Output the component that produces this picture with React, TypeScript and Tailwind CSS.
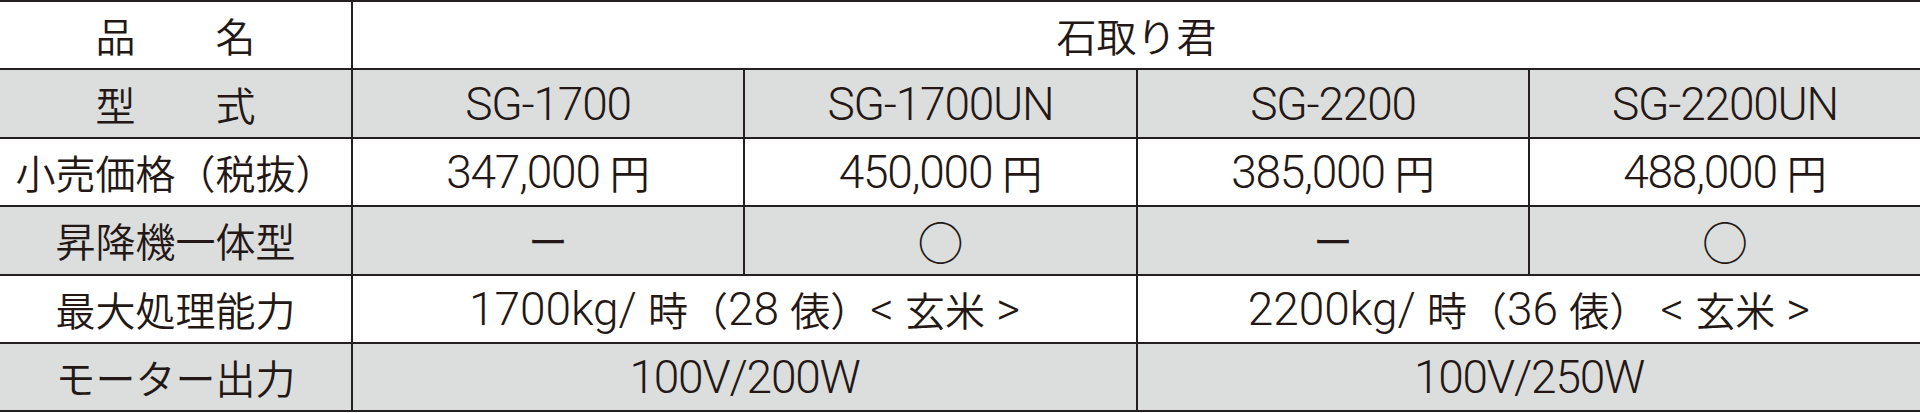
import React from "react";

const JP = { fontFamily: "'Noto Sans CJK JP', 'Noto Sans', sans-serif" };

function L({ children }: { children: React.ReactNode }) {
  return (
    <span className="font-['Roboto','Noto_Sans_CJK_JP',sans-serif] font-light text-[46px] tracking-[-1.2px]">
      {children}
    </span>
  );
}

function W({ children }: { children: React.ReactNode }) {
  return (
    <span className="font-['Roboto','Noto_Sans_CJK_JP',sans-serif] font-light text-[46px] tracking-[0px]">
      {children}
    </span>
  );
}

function Cell({
  children,
  span = 1,
  first = false,
  gray = false,
}: {
  children?: React.ReactNode;
  span?: number;
  first?: boolean;
  gray?: boolean;
}) {
  const spanCls =
    span === 4 ? "col-span-4" : span === 2 ? "col-span-2" : "col-span-1";
  return (
    <div
      className={`${spanCls} ${first ? "" : "border-l-2"} ${
        gray ? "bg-[#dcdddd]" : "bg-white"
      } border-b-2 border-[#231f20] h-[68.4px] flex items-center justify-center text-[40px] font-[350] leading-none text-[#231815] whitespace-pre`}
    >
      {children}
    </div>
  );
}

export default function App() {
  return (
    <div className="w-[1920px] h-[413px] bg-white overflow-hidden" style={JP}>
      <div className="grid grid-cols-[351px_392px_393px_392px_392px] border-t-2 border-[#231f20]">
        <Cell first>品　　名</Cell>
        <Cell span={4}>石取り君</Cell>

        <Cell first gray>型　　式</Cell>
        <Cell gray><L>SG-1700</L></Cell>
        <Cell gray><L>SG-1700UN</L></Cell>
        <Cell gray><L>SG-2200</L></Cell>
        <Cell gray><L>SG-2200UN</L></Cell>

        <Cell first>小売価格（税抜）</Cell>
        <Cell><L>347,000 </L>円</Cell>
        <Cell><L>450,000 </L>円</Cell>
        <Cell><L>385,000 </L>円</Cell>
        <Cell><L>488,000 </L>円</Cell>

        <Cell first gray>昇降機一体型</Cell>
        <Cell gray>ー</Cell>
        <Cell gray><span className="text-[46px]">○</span></Cell>
        <Cell gray>ー</Cell>
        <Cell gray><span className="text-[46px]">○</span></Cell>

        <Cell first>最大処理能力</Cell>
        <Cell span={2}>
          <W>1700kg/ </W>時（<W>28 </W>俵）<W>&lt; </W>玄米<W> &gt;</W>
        </Cell>
        <Cell span={2}>
          <W>2200kg/ </W>時（<W>36 </W>俵）<W> &lt; </W>玄米<W> &gt;</W>
        </Cell>

        <Cell first gray>モーター出力</Cell>
        <Cell span={2} gray><L>100V/200W</L></Cell>
        <Cell span={2} gray><L>100V/250W</L></Cell>
      </div>
    </div>
  );
}
